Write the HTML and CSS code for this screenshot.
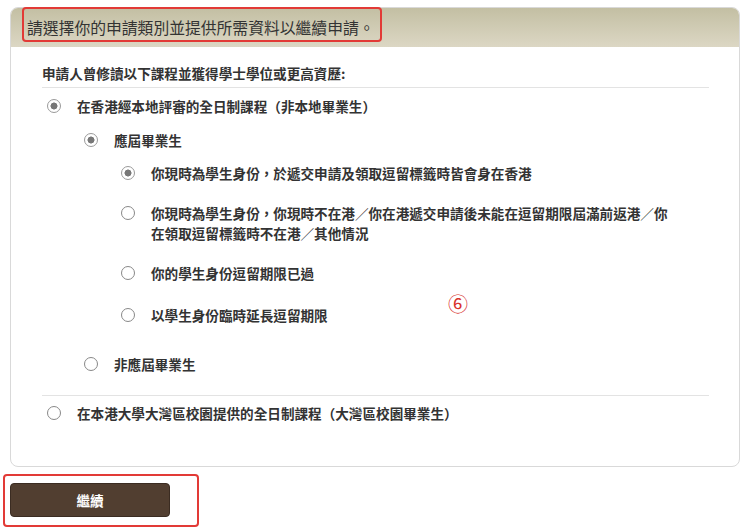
FILE: index.html
```html
<!DOCTYPE html>
<html lang="zh-Hant">
<head>
<meta charset="utf-8">
<link rel="stylesheet" href="styles.css">
</head>
<body>
<div class="page">
  <div class="card">
    <div class="card-head">
      <span class="head-text">請選擇你的申請類別並提供所需資料以繼續申請。</span>
      <span class="mark mark-head"></span>
    </div>
    <div class="card-body">
      <div class="intro">申請人曾修讀以下課程並獲得學士學位或更高資歷:</div>
      <div class="opts">
        <label class="opt"><input type="radio" name="a" checked><span>在香港經本地評審的全日制課程（非本地畢業生）</span></label>
        <div class="sub">
          <label class="opt o2"><input type="radio" name="b" checked><span>應屆畢業生</span></label>
          <div class="sub">
            <label class="opt o3"><input type="radio" name="c" checked><span>你現時為學生身份，於遞交申請及領取逗留標籤時皆會身在香港</span></label>
            <label class="opt o4"><input type="radio" name="c"><span>你現時為學生身份，你現時不在港∕你在港遞交申請後未能在逗留期限屆滿前返港∕你<br>在領取逗留標籤時不在港∕其他情況</span></label>
            <label class="opt o5"><input type="radio" name="c"><span>你的學生身份逗留期限已過</span></label>
            <label class="opt o6"><input type="radio" name="c"><span>以學生身份臨時延長逗留期限</span></label>
          </div>
          <label class="opt o7"><input type="radio" name="b"><span>非應屆畢業生</span></label>
        </div>
      </div>
      <div class="divider"></div>
      <div class="opts">
        <label class="opt o8"><input type="radio" name="a"><span>在本港大學大灣區校園提供的全日制課程（大灣區校園畢業生）</span></label>
      </div>
    </div>
    <span class="num">⑥</span>
  </div>
  <div class="actions">
    <button class="btn" type="button">繼續</button>
    <span class="mark mark-btn"></span>
  </div>
</div>
</body>
</html>
```
FILE: styles.css
```css
* { box-sizing: border-box; }
html, body { margin: 0; padding: 0; background: #fff; }
body {
  font-family: "Noto Sans CJK TC", "Noto Sans", sans-serif;
  color: #333;
  width: 749px;
  height: 529px;
  overflow: hidden;
}
.page { padding: 7px 9px 0 10px; }
.card {
  position: relative;
  border: 1px solid #d9d9d9;
  border-radius: 8px;
  background: #fff;
}
.card-head {
  position: relative;
  height: 39px;
  padding-left: 16px;
  display: flex;
  align-items: center;
  border-radius: 7px 7px 0 0;
  background: linear-gradient(#c3bfa3, #dcd7c4);
}
.head-text {
  font-size: 15.8px;
  font-weight: 400;
  color: #333;
  line-height: 20px;
}
.mark {
  position: absolute;
  border: 2px solid #e23a36;
  border-radius: 4px;
}
.mark-head { left: 11px; top: -1px; width: 360px; height: 35px; }
.card-body { padding: 16px 30px 43px 31px; }
.intro {
  font-size: 13.6px;
  font-weight: 700;
  line-height: 20px;
  padding-bottom: 4px;
  border-bottom: 1px solid #e3e3e3;
}
.opts { margin-left: 6px; }
.opt {
  display: flex;
  align-items: flex-start;
  font-size: 13.6px;
  font-weight: 700;
  line-height: 20px;
  color: #333;
}
.opts > .opt:first-child { margin-top: 8px; }
.sub { margin-left: 37px; }
.o2 { margin-top: 14px; }
.o3 { margin-top: 13px; }
.o4 { margin-top: 20px; }
.o5 { margin-top: 20px; }
.o6 { margin-top: 22px; }
.o7 { margin-top: 29px; }
.opt input {
  -webkit-appearance: none;
  appearance: none;
  flex: none;
  width: 14px;
  height: 14px;
  margin: 3px 16px 0 -1px;
  border: 1px solid #888;
  border-radius: 50%;
  background: #fff;
}
.opt input:checked {
  border-color: #9a9a9a;
  background: radial-gradient(circle, #777 0, #777 3.2px, #fff 3.8px);
}
.divider { margin-top: 21px; border-top: 1px solid #e3e3e3; }
.opts > .o8:first-child { margin-top: 7px; }
.num {
  position: absolute;
  left: 437px;
  top: 286px;
  font-family: "Noto Sans CJK TC", sans-serif;
  font-size: 20px;
  font-weight: 400;
  line-height: 20px;
  color: #d8312c;
}
.actions { position: relative; padding-top: 16px; }
.btn {
  display: block;
  width: 160px;
  height: 34px;
  border: 1px solid #3b2c22;
  border-radius: 4px;
  background: #513e30;
  color: #fff;
  font-family: "Noto Sans CJK TC", sans-serif;
  font-size: 13.6px;
  font-weight: 700;
  padding: 0;
}
.mark-btn { left: -7px; top: 7px; width: 196px; height: 53px; }
```
